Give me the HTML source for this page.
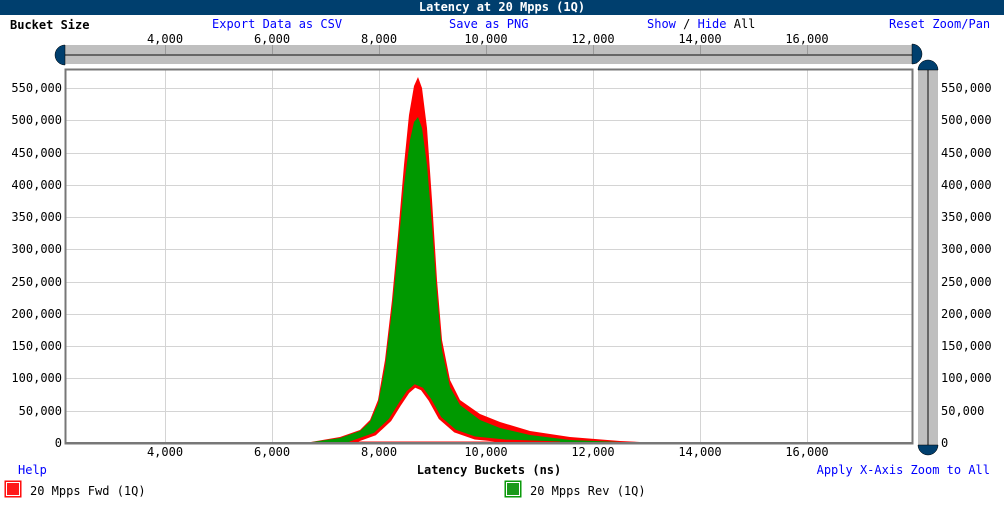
<!DOCTYPE html>
<html><head><meta charset="utf-8"><style>
body{margin:0;width:1004px;height:514px;background:#fff;overflow:hidden;font-family:"DejaVu Sans Mono","Liberation Mono",monospace;font-size:12px;}
.t{position:absolute;white-space:nowrap;}
.b{color:#0000ff;}
</style></head><body>
<div style="position:absolute;left:0;top:0;width:1004px;height:15px;background:#003f6e;color:#fff;font-weight:bold;text-align:center;line-height:15px;">Latency at 20 Mpps (1Q)</div>
<div class="t" style="left:10px;top:18px;font-weight:bold;">Bucket Size</div>
<div class="t b" style="left:212px;top:17px;">Export Data as CSV</div>
<div class="t b" style="left:449px;top:17px;">Save as PNG</div>
<div class="t" style="left:647px;top:17px;"><span class="b">Show</span> / <span class="b">Hide</span> All</div>
<div class="t b" style="left:889px;top:17px;">Reset Zoom/Pan</div>
<svg width="1004" height="514" style="position:absolute;left:0;top:0" font-family="DejaVu Sans Mono, Liberation Mono, monospace" font-size="12">
<!-- top slider -->
<rect x="65" y="45" width="852" height="19" fill="#bfbfbf"/>
<line x1="65" y1="55" x2="917" y2="55" stroke="#666" stroke-width="2"/>
<path d="M65 45 A10 10 0 0 0 65 65 Z" fill="#003f6e" stroke="#000" stroke-width="0.5"/>
<path d="M912 44 A10 10 0 0 1 912 64 Z" fill="#003f6e" stroke="#000" stroke-width="0.5"/>
<g stroke="#999" stroke-width="1">
<line x1="165.5" y1="45" x2="165.5" y2="54"/><line x1="272.5" y1="45" x2="272.5" y2="54"/><line x1="379.5" y1="45" x2="379.5" y2="54"/><line x1="486.5" y1="45" x2="486.5" y2="54"/><line x1="593.5" y1="45" x2="593.5" y2="54"/><line x1="700.5" y1="45" x2="700.5" y2="54"/><line x1="807.5" y1="45" x2="807.5" y2="54"/>
</g>
<g text-anchor="middle" fill="#000">
<text x="165" y="43">4,000</text><text x="272" y="43">6,000</text><text x="379" y="43">8,000</text><text x="486" y="43">10,000</text><text x="593" y="43">12,000</text><text x="700" y="43">14,000</text><text x="807" y="43">16,000</text>
</g>
<!-- right slider -->
<rect x="918" y="70" width="20" height="377" fill="#bfbfbf"/>
<line x1="928" y1="70" x2="928" y2="447" stroke="#666" stroke-width="2"/>
<path d="M918 70 A10 10 0 0 1 938 70 Z" fill="#003f6e" stroke="#000" stroke-width="0.5"/>
<path d="M918 445 A10 10 0 0 0 938 445 Z" fill="#003f6e" stroke="#000" stroke-width="0.5"/>
<!-- grid -->
<g stroke="#d4d4d4" stroke-width="1">
<line x1="165.5" y1="70" x2="165.5" y2="443"/><line x1="272.5" y1="70" x2="272.5" y2="443"/><line x1="379.5" y1="70" x2="379.5" y2="443"/><line x1="486.5" y1="70" x2="486.5" y2="443"/><line x1="593.5" y1="70" x2="593.5" y2="443"/><line x1="700.5" y1="70" x2="700.5" y2="443"/><line x1="807.5" y1="70" x2="807.5" y2="443"/>
<line x1="66" y1="88.5" x2="912" y2="88.5"/><line x1="66" y1="120.5" x2="912" y2="120.5"/><line x1="66" y1="153.5" x2="912" y2="153.5"/><line x1="66" y1="185.5" x2="912" y2="185.5"/><line x1="66" y1="217.5" x2="912" y2="217.5"/><line x1="66" y1="249.5" x2="912" y2="249.5"/><line x1="66" y1="282.5" x2="912" y2="282.5"/><line x1="66" y1="314.5" x2="912" y2="314.5"/><line x1="66" y1="346.5" x2="912" y2="346.5"/><line x1="66" y1="378.5" x2="912" y2="378.5"/><line x1="66" y1="411.5" x2="912" y2="411.5"/>
</g>
<!-- curves -->
<path d="M305 443 L340 437 L360 430 L370 420 L378 400 L385 360 L392 300 L398 235 L404 165 L409 115 L414 86 L418 77 L422 88 L427 128 L432 200 L437 280 L442 340 L450 380 L460 400 L480 414 L500 422 L530 431 L570 437 L620 441 L660 443 Z" fill="#ff0000"/>
<path d="M305 443 L340 438 L360 431 L370 422 L378 404 L385 368 L392 310 L398 250 L404 185 L410 140 L414 122 L418 117 L422 128 L427 165 L432 225 L437 295 L442 350 L450 387 L460 405 L480 420 L500 428 L530 435 L570 440 L620 442 L660 443 Z" fill="#009900"/>
<path d="M350 443 L375 434 L390 420 L400 404 L408 392 L415 386 L422 389 L430 400 L440 418 L455 431 L475 438 L505 441 L560 443 Z" fill="#fff" stroke="#ff0000" stroke-width="3"/>
<!-- axes -->
<rect x="65.5" y="69.5" width="847" height="374" fill="none" stroke="#777" stroke-width="2"/>
<line x1="66" y1="443" x2="912" y2="443" stroke="#777" stroke-width="2"/>
<g text-anchor="end" fill="#000">
<text x="62" y="92">550,000</text><text x="62" y="124">500,000</text><text x="62" y="157">450,000</text><text x="62" y="189">400,000</text><text x="62" y="221">350,000</text><text x="62" y="253">300,000</text><text x="62" y="286">250,000</text><text x="62" y="318">200,000</text><text x="62" y="350">150,000</text><text x="62" y="382">100,000</text><text x="62" y="415">50,000</text><text x="62" y="447">0</text>
</g>
<g fill="#000">
<text x="941" y="92">550,000</text><text x="941" y="124">500,000</text><text x="941" y="157">450,000</text><text x="941" y="189">400,000</text><text x="941" y="221">350,000</text><text x="941" y="253">300,000</text><text x="941" y="286">250,000</text><text x="941" y="318">200,000</text><text x="941" y="350">150,000</text><text x="941" y="382">100,000</text><text x="941" y="415">50,000</text><text x="941" y="447">0</text>
</g>
<g text-anchor="middle" fill="#000">
<text x="165" y="456">4,000</text><text x="272" y="456">6,000</text><text x="379" y="456">8,000</text><text x="486" y="456">10,000</text><text x="593" y="456">12,000</text><text x="700" y="456">14,000</text><text x="807" y="456">16,000</text>
<text x="489" y="474" font-weight="bold">Latency Buckets (ns)</text>
</g>
<text x="18" y="474" fill="#0000ff">Help</text>
<text x="990" y="474" fill="#0000ff" text-anchor="end">Apply X-Axis Zoom to All</text>
<rect x="5" y="481" width="16" height="16" fill="#ff2020" stroke="#ff0000" stroke-width="1"/>
<rect x="6.5" y="482.5" width="13" height="13" fill="#ff1a1a" stroke="#fff" stroke-width="1"/>
<text x="30" y="495" fill="#000">20 Mpps Fwd (1Q)</text>
<rect x="505" y="481" width="16" height="16" fill="#1a9a1a" stroke="#009900" stroke-width="1"/>
<rect x="506.5" y="482.5" width="13" height="13" fill="#1a9a1a" stroke="#fff" stroke-width="1"/>
<text x="530" y="495" fill="#000">20 Mpps Rev (1Q)</text>
</svg>
</body></html>
